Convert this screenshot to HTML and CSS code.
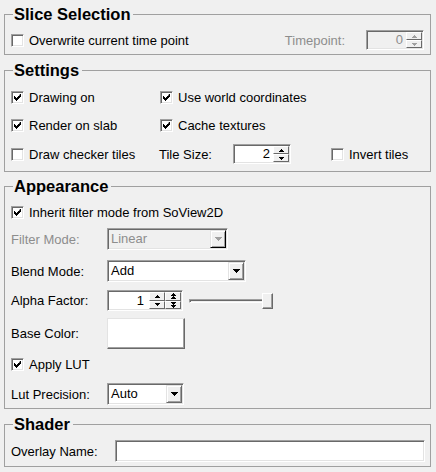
FILE: index.html
```html
<!DOCTYPE html>
<html>
<head>
<meta charset="utf-8">
<link rel="stylesheet" href="styles.css">
</head>
<body>
<svg class="defs" width="0" height="0">
  <symbol id="chk" viewBox="0 0 7 7"><path d="M6 0h1v3h-1v1h-1v1h-1v1h-1v1h-1v-1h-1v-1h-1v-3h1v1h1v1h1v-1h1v-1h1z"/></symbol>
  <symbol id="up5" viewBox="0 0 5 3"><path d="M2 0h1v1h1v1h1v1H0V2h1V1h1z"/></symbol>
  <symbol id="dn5" viewBox="0 0 5 3"><path d="M0 0h5v1h-1v1h-1v1h-1v-1h-1v-1h-1z"/></symbol>
  <symbol id="dn7" viewBox="0 0 7 4"><path d="M0 0h7v1h-1v1h-1v1h-1v1h-1v-1h-1v-1h-1v-1h-1z"/></symbol>
  <symbol id="upup" viewBox="0 0 5 6"><path d="M2 0h1v1h1v1h1v1H0V2h1V1h1z M2 3h1v1h1v1h1v1H0V5h1V4h1z"/></symbol>
  <symbol id="dndn" viewBox="0 0 5 6"><path d="M0 0h5v1h-1v1h-1v1h-1v-1h-1v-1h-1z M0 3h5v1h-1v1h-1v1h-1v-1h-1v-1h-1z"/></symbol>
</svg>

<fieldset class="group g-slice">
  <legend>Slice Selection</legend>
  <div class="row">
    <span class="cb"><span class="box"></span><span>Overwrite current time point</span></span>
    <span class="lbl dis tp-lbl">Timepoint:</span>
    <span class="spin dis w58">
      <span class="val">0</span>
      <span class="sbtns"><span class="sbtn"><svg class="a5"><use href="#up5"/></svg></span><span class="sbtn"><svg class="a5"><use href="#dn5"/></svg></span></span>
    </span>
  </div>
</fieldset>

<fieldset class="group g-settings">
  <legend>Settings</legend>
  <div class="row">
    <span class="cb col1"><span class="box"><svg class="ck"><use href="#chk"/></svg></span><span>Drawing on</span></span>
    <span class="cb"><span class="box"><svg class="ck"><use href="#chk"/></svg></span><span>Use world coordinates</span></span>
  </div>
  <div class="row mt8">
    <span class="cb col1"><span class="box"><svg class="ck"><use href="#chk"/></svg></span><span>Render on slab</span></span>
    <span class="cb"><span class="box"><svg class="ck"><use href="#chk"/></svg></span><span>Cache textures</span></span>
  </div>
  <div class="row mt9">
    <span class="cb col1b"><span class="box"></span><span>Draw checker tiles</span></span>
    <span class="lbl tile-lbl">Tile Size:</span>
    <span class="spin w58">
      <span class="val">2</span>
      <span class="sbtns"><span class="sbtn"><svg class="a5"><use href="#up5"/></svg></span><span class="sbtn"><svg class="a5"><use href="#dn5"/></svg></span></span>
    </span>
    <span class="cb invert"><span class="box"></span><span>Invert tiles</span></span>
  </div>
</fieldset>

<fieldset class="group g-appear">
  <legend>Appearance</legend>
  <div class="row">
    <span class="cb"><span class="box"><svg class="ck"><use href="#chk"/></svg></span><span>Inherit filter mode from SoView2D</span></span>
  </div>
  <div class="row r22 mt6">
    <span class="lbl dis fcol">Filter Mode:</span>
    <span class="combo dis w121"><span class="ctext">Linear</span><span class="cbtn"><svg class="a7"><use href="#dn7"/></svg></span></span>
  </div>
  <div class="row r22 mt10">
    <span class="lbl fcol">Blend Mode:</span>
    <span class="combo w139"><span class="ctext">Add</span><span class="cbtn"><svg class="a7"><use href="#dn7"/></svg></span></span>
  </div>
  <div class="row r21 mt8">
    <span class="lbl fcol">Alpha Factor:</span>
    <span class="spin w76 h21">
      <span class="val">1</span>
      <span class="sbtns"><span class="sbtn"><svg class="a5"><use href="#up5"/></svg></span><span class="sbtn"><svg class="a5"><use href="#dn5"/></svg></span></span>
      <span class="sbtns"><span class="sbtn"><svg class="a56"><use href="#upup"/></svg></span><span class="sbtn"><svg class="a56"><use href="#dndn"/></svg></span></span>
    </span>
    <span class="slider"><span class="groove"></span><span class="thumb"></span></span>
  </div>
  <div class="row r31 mt7">
    <span class="lbl fcol">Base Color:</span>
    <span class="colorbtn"></span>
  </div>
  <div class="row mt5">
    <span class="cb"><span class="box"><svg class="ck"><use href="#chk"/></svg></span><span>Apply LUT</span></span>
  </div>
  <div class="row r22 mt9">
    <span class="lbl fcol">Lut Precision:</span>
    <span class="combo w77"><span class="ctext">Auto</span><span class="cbtn"><svg class="a7"><use href="#dn7"/></svg></span></span>
  </div>
</fieldset>

<fieldset class="group g-shader">
  <legend>Shader</legend>
  <div class="row r22">
    <span class="lbl ocol">Overlay Name:</span>
    <span class="textfield"></span>
  </div>
</fieldset>
</body>
</html>
```

FILE: styles.css
```css
html, body {
  margin: 0;
  padding: 0;
}
body {
  width: 436px;
  height: 472px;
  overflow: hidden;
  background: #f0f0f0;
  color: #000;
  font-family: "Liberation Sans", Arial, sans-serif;
  font-size: 13px;
}
.defs {
  position: absolute;
  width: 0;
  height: 0;
}

/* group boxes */
.group {
  margin: 5px 5px 0 4px;
  padding: 0 6px;
  border: 1px solid #a0a0a0;
  min-width: 0;
}
.g-slice { margin-top: 4px; padding-top: 5px; padding-bottom: 4px; }
.g-settings { padding-top: 6px; padding-bottom: 7px; }
.g-appear { margin-top: 4px; padding-top: 5px; padding-bottom: 3px; }
.g-shader { padding-top: 5px; padding-bottom: 4px; }
legend {
  font-weight: bold;
  font-size: 16.5px;
  line-height: 21px;
  height: 21px;
  padding: 0 3px 0 1px;
  margin-left: 2px;
}

/* rows */
.row {
  display: flex;
  align-items: center;
  height: 20px;
  white-space: nowrap;
}
.r21 { height: 21px; }
.r22 { height: 22px; }
.r31 { height: 31px; }
.mt5 { margin-top: 5px; }
.mt6 { margin-top: 6px; }
.mt7 { margin-top: 7px; }
.mt8 { margin-top: 8px; }
.mt9 { margin-top: 9px; }
.mt10 { margin-top: 10px; }

.lbl.dis, .spin.dis .val, .combo.dis .ctext { color: #8d8d8d; }
.tp-lbl { margin-left: auto; margin-right: 21px; }
.col1 { width: 149px; }
.col1b { width: 148px; }
.tile-lbl { width: 74px; }
.invert { margin-left: 40px; }
.fcol { width: 96px; }
.ocol { width: 104px; }

/* checkbox */
.cb {
  display: flex;
  align-items: center;
}
.box {
  box-sizing: border-box;
  width: 13px;
  height: 13px;
  margin-right: 5px;
  background: #fff;
  border: 1px solid;
  border-color: #a0a0a0 #fff #fff #a0a0a0;
  box-shadow: inset 1px 1px 0 #696969, inset -1px -1px 0 #e3e3e3;
  display: flex;
  align-items: center;
  justify-content: center;
  flex: none;
}
.ck {
  width: 7px;
  height: 7px;
  fill: #000;
  display: block;
}

/* sunken field common */
.spin, .combo, .textfield {
  box-sizing: border-box;
  border: 1px solid;
  border-color: #a0a0a0 #fff #fff #a0a0a0;
  padding: 1px;
  box-shadow: inset 1px 1px 0 #696969, inset -1px -1px 0 #e3e3e3;
  background: #fff;
  display: flex;
}

/* spin box */
.spin { height: 20px; }
.spin.h21 { height: 21px; }
.spin.dis { background: #f0f0f0; }
.w58 { width: 58px; }
.w76 { width: 76px; }
.val {
  flex: 1;
  text-align: right;
  padding-right: 3px;
  line-height: 16px;
}
.spin.h21 .val { line-height: 17px; padding-right: 5px; }
.sbtns {
  display: flex;
  flex-direction: column;
  width: 16px;
}
.sbtn {
  flex: 1;
  box-sizing: border-box;
  background: #f0f0f0;
  border: 1px solid;
  border-color: #fff #696969 #696969 #fff;
  display: flex;
  align-items: center;
  justify-content: center;
}
.a5 { width: 5px; height: 3px; fill: #000; display: block; }
.a56 { width: 5px; height: 6px; fill: #000; display: block; }
.a7 { width: 7px; height: 4px; fill: #000; display: block; }
.dis .a5, .dis .a7 { fill: #a0a0a0; }

/* combo */
.combo { height: 22px; }
.combo.dis { background: #f0f0f0; }
.w121 { width: 121px; }
.w139 { width: 139px; }
.w77 { width: 77px; }
.ctext {
  flex: 1;
  padding-left: 2px;
  line-height: 18px;
}
.cbtn {
  width: 16px;
  box-sizing: border-box;
  background: #f0f0f0;
  border: 1px solid;
  border-color: #e3e3e3 #696969 #696969 #e3e3e3;
  box-shadow: inset 1px 1px 0 #fff, inset -1px -1px 0 #a0a0a0;
  display: flex;
  align-items: center;
  justify-content: center;
}
.combo.dis .cbtn {
  border-color: #e3e3e3 #000 #000 #e3e3e3;
}

/* slider */
.slider {
  display: flex;
  align-items: center;
  width: 84px;
  height: 21px;
  margin-left: 6px;
}
.groove {
  flex: 1;
  height: 4px;
  box-sizing: border-box;
  border: 1px solid;
  border-color: #a0a0a0 #fff #fff #a0a0a0;
  box-shadow: inset 1px 1px 0 #696969;
}
.thumb {
  width: 11px;
  height: 16px;
  margin-left: -11px;
  margin-top: 1px;
  box-sizing: border-box;
  background: #f0f0f0;
  border: 1px solid;
  border-color: #fff #696969 #696969 #fff;
  box-shadow: inset -1px -1px 0 #a0a0a0;
}

/* color button */
.colorbtn {
  width: 78px;
  height: 31px;
  box-sizing: border-box;
  background: #fff;
  border: 1px solid;
  border-color: #e3e3e3 #696969 #696969 #e3e3e3;
  box-shadow: inset -1px -1px 0 #a0a0a0;
}

/* text field */
.textfield {
  flex: 1;
  height: 22px;
  margin-right: -1px;
}
```
